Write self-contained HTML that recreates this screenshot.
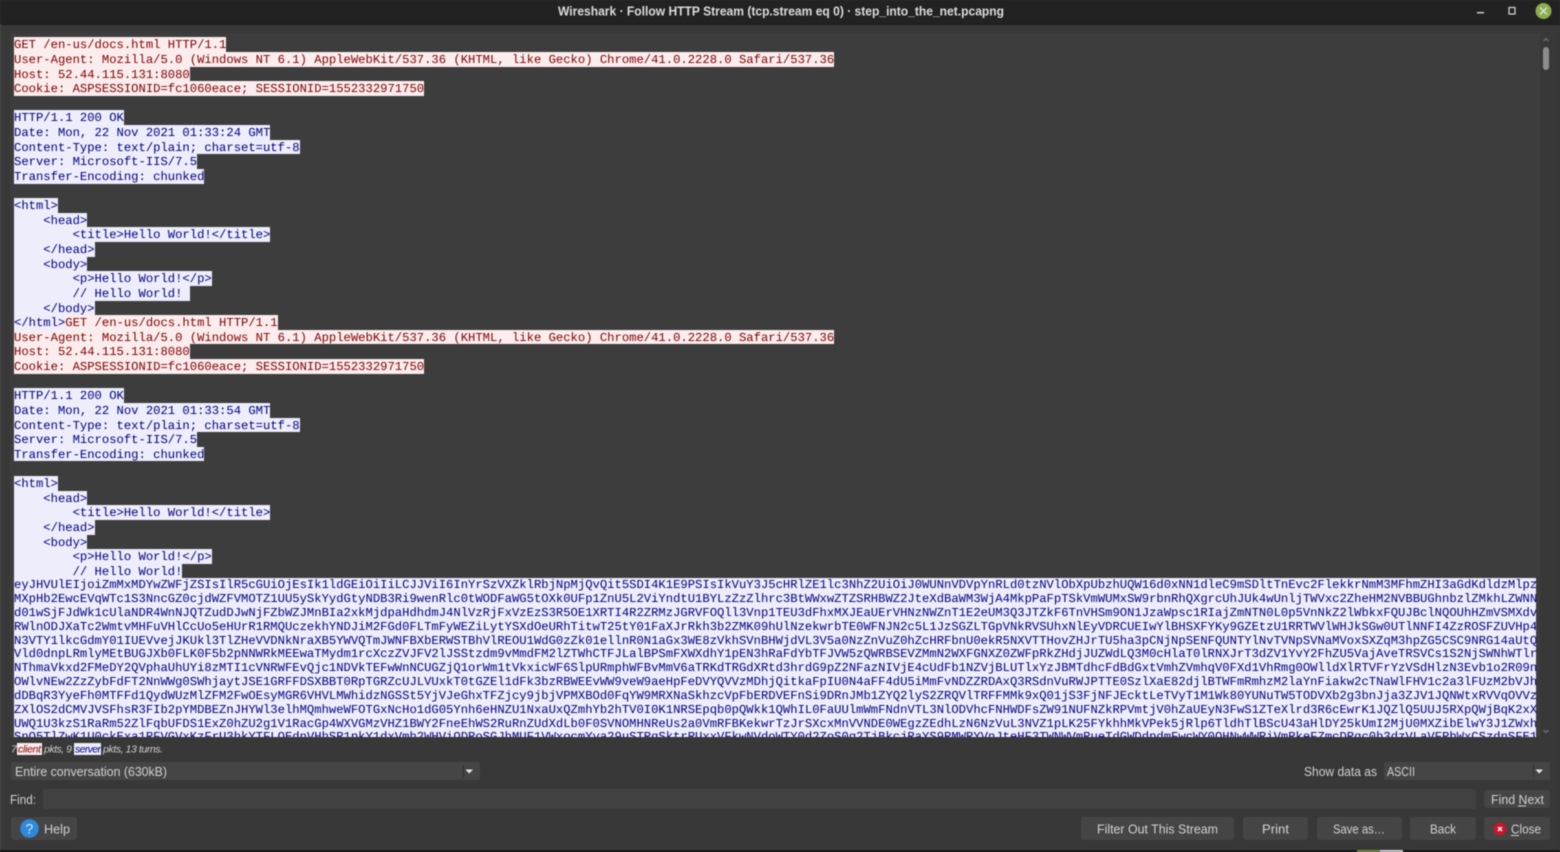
<!DOCTYPE html>
<html lang="en"><head><meta charset="utf-8"><title>Wireshark · Follow HTTP Stream</title>
<style>
html,body{margin:0;padding:0;width:1560px;height:852px;overflow:hidden;background:#383838}
#w{position:relative;width:1560px;height:852px;overflow:hidden;background:#383838;filter:blur(.42px)}
.a{position:absolute}
#tb{left:0;top:0;width:1560px;height:24px;background:#222}
#tb2{left:0;top:24px;width:1560px;height:1px;background:#1c1c1c}
#edge{left:0;top:24px;width:1px;height:826px;background:#4a4a4a}
#panel{left:10px;top:33px;width:1530px;height:704px;background:#3d3d3d}
#txt{left:14px;top:37.3px;width:1522px;height:699.7px;overflow:hidden;font:12.21px/16.6px "Liberation Mono",monospace;text-rendering:geometricPrecision}
#txt div{height:14.63px;white-space:pre}
#txt span{display:inline-block;height:14.63px;vertical-align:top}
.c{background:#fbeded;color:#7f0000}
.s{background:#ededfb;color:#00007f}
#txt div.b{background:#ededfb;color:#00007f;width:1522px;height:13.82px;line-height:15.4px}
.r{background:#454545;border-radius:2px}
.btn{background:#454545;border-radius:3px}
svg{position:absolute;left:0;top:0}
svg text{font-family:"Liberation Sans",sans-serif;font-size:13px;fill:#d2d2d2}
</style></head><body><div id="w">
<div id="tb" class="a"></div><div id="tb2" class="a"></div><div id="edge" class="a"></div>
<div id="panel" class="a"></div>
<div id="txt" class="a">
<div><span class="c">GET /en-us/docs.html HTTP/1.1</span></div>
<div><span class="c">User-Agent: Mozilla/5.0 (Windows NT 6.1) AppleWebKit/537.36 (KHTML, like Gecko) Chrome/41.0.2228.0 Safari/537.36</span></div>
<div><span class="c">Host: 52.44.115.131:8080</span></div>
<div><span class="c">Cookie: ASPSESSIONID=fc1060eace; SESSIONID=1552332971750</span></div>
<div></div>
<div><span class="s">HTTP/1.1 200 OK</span></div>
<div><span class="s">Date: Mon, 22 Nov 2021 01:33:24 GMT</span></div>
<div><span class="s">Content-Type: text/plain; charset=utf-8</span></div>
<div><span class="s">Server: Microsoft-IIS/7.5</span></div>
<div><span class="s">Transfer-Encoding: chunked</span></div>
<div></div>
<div><span class="s">&lt;html&gt;</span></div>
<div><span class="s">    &lt;head&gt;</span></div>
<div><span class="s">        &lt;title&gt;Hello World!&lt;/title&gt;</span></div>
<div><span class="s">    &lt;/head&gt;</span></div>
<div><span class="s">    &lt;body&gt;</span></div>
<div><span class="s">        &lt;p&gt;Hello World!&lt;/p&gt;</span></div>
<div><span class="s">        // Hello World! </span></div>
<div><span class="s">    &lt;/body&gt;</span></div>
<div><span class="s">&lt;/html&gt;</span><span class="c">GET /en-us/docs.html HTTP/1.1</span></div>
<div><span class="c">User-Agent: Mozilla/5.0 (Windows NT 6.1) AppleWebKit/537.36 (KHTML, like Gecko) Chrome/41.0.2228.0 Safari/537.36</span></div>
<div><span class="c">Host: 52.44.115.131:8080</span></div>
<div><span class="c">Cookie: ASPSESSIONID=fc1060eace; SESSIONID=1552332971750</span></div>
<div></div>
<div><span class="s">HTTP/1.1 200 OK</span></div>
<div><span class="s">Date: Mon, 22 Nov 2021 01:33:54 GMT</span></div>
<div><span class="s">Content-Type: text/plain; charset=utf-8</span></div>
<div><span class="s">Server: Microsoft-IIS/7.5</span></div>
<div><span class="s">Transfer-Encoding: chunked</span></div>
<div></div>
<div><span class="s">&lt;html&gt;</span></div>
<div><span class="s">    &lt;head&gt;</span></div>
<div><span class="s">        &lt;title&gt;Hello World!&lt;/title&gt;</span></div>
<div><span class="s">    &lt;/head&gt;</span></div>
<div><span class="s">    &lt;body&gt;</span></div>
<div><span class="s">        &lt;p&gt;Hello World!&lt;/p&gt;</span></div>
<div><span class="s">        // Hello World!</span></div>
<div class="b">eyJHVUlEIjoiZmMxMDYwZWFjZSIsIlR5cGUiOjEsIk1ldGEiOiIiLCJJViI6InYrSzVXZklRbjNpMjQvQit5SDI4K1E9PSIsIkVuY3J5cHRlZE1lc3NhZ2UiOiJ0WUNnVDVpYnRLd0tzNVlObXpUbzhUQW16d0xNN1dleC9mSDltTnEvc2FlekkrNmM3MFhmZHI3aGdKdldzMlpz</div>
<div class="b">MXpHb2EwcEVqWTc1S3NncGZ0cjdWZFVMOTZ1UU5ySkYydGtyNDB3Ri9wenRlc0tWODFaWG5tOXk0UFp1ZnU5L2ViYndtU1BYLzZzZlhrc3BtWWxwZTZSRHBWZ2JteXdBaWM3WjA4MkpPaFpTSkVmWUMxSW9rbnRhQXgrcUhJUk4wUnljTWVxc2ZheHM2NVBBUGhnbzlZMkhLZWNN</div>
<div class="b">d01wSjFJdWk1cUlaNDR4WnNJQTZudDJwNjFZbWZJMnBIa2xkMjdpaHdhdmJ4NlVzRjFxVzEzS3R5OE1XRTI4R2ZRMzJGRVFOQll3Vnp1TEU3dFhxMXJEaUErVHNzNWZnT1E2eUM3Q3JTZkF6TnVHSm9ON1JzaWpsc1RIajZmNTN0L0p5VnNkZ2lWbkxFQUJBclNQOUhHZmVSMXdv</div>
<div class="b">RWlnODJXaTc2WmtvMHFuVHlCcUo5eHUrR1RMQUczekhYNDJiM2FGd0FLTmFyWEZiLytYSXdOeURhTitwT25tY01FaXJrRkh3b2ZMK09hUlNzekwrbTE0WFNJN2c5L1JzSGZLTGpVNkRVSUhxNlEyVDRCUEIwYlBHSXFYKy9GZEtzU1RRTWVlWHJkSGw0UTlNNFI4ZzROSFZUVHp4</div>
<div class="b">N3VTY1lkcGdmY01IUEVvejJKUkl3TlZHeVVDNkNraXB5YWVQTmJWNFBXbERWSTBhVlREOU1WdG0zZk01ellnR0N1aGx3WE8zVkhSVnBHWjdVL3V5a0NzZnVuZ0hZcHRFbnU0ekR5NXVTTHovZHJrTU5ha3pCNjNpSENFQUNTYlNvTVNpSVNaMVoxSXZqM3hpZG5CSC9NRG14aUtQ</div>
<div class="b">Vld0dnpLRmlyMEtBUGJXb0FLK0F5b2pNNWRkMEEwaTMydm1rcXczZVJFV2lJSStzdm9vMmdFM2lZTWhCTFJLalBPSmFXWXdhY1pEN3hRaFdYbTFJVW5zQWRBSEVZMmN2WXFGNXZ0ZWFpRkZHdjJUZWdLQ3M0cHlaT0lRNXJrT3dZV1YvY2FhZU5VajAveTRSVCs1S2NjSWNhWTlr</div>
<div class="b">NThmaVkxd2FMeDY2QVphaUhUYi8zMTI1cVNRWFEvQjc1NDVkTEFwWnNCUGZjQ1orWm1tVkxicWF6SlpURmphWFBvMmV6aTRKdTRGdXRtd3hrdG9pZ2NFazNIVjE4cUdFb1NZVjBLUTlxYzJBMTdhcFdBdGxtVmhZVmhqV0FXd1VhRmg0OWlldXlRTVFrYzVSdHlzN3Evb1o2R09n</div>
<div class="b">OWlvNEw2ZzZybFdFT2NnWWg0SWhjaytJSE1GRFFDSXBBT0RpTGRZcUJLVUxkT0tGZEl1dFk3bzRBWEEvWW9veW9aeHpFeDVYQVVzMDhjQitkaFpIU0N4aFF4dU5iMmFvNDZZRDAxQ3RSdnVuRWJPTTE0SzlXaE82djlBTWFmRmhzM2laYnFiakw2cTNaWlFHV1c2a3lFUzM2bVJh</div>
<div class="b">dDBqR3YyeFh0MTFFd1QydWUzMlZFM2FwOEsyMGR6VHVLMWhidzNGSSt5YjVJeGhxTFZjcy9jbjVPMXBOd0FqYW9MRXNaSkhzcVpFbERDVEFnSi9DRnJMb1ZYQ2lyS2ZRQVlTRFFMMk9xQ01jS3FjNFJEcktLeTVyT1M1Wk80YUNuTW5TODVXb2g3bnJja3ZJV1JQNWtxRVVqOVVz</div>
<div class="b">ZXlOS2dCMVJVSFhsR3FIb2pYMDBEZnJHYWl3elhMQmhweWFOTGxNcHo1dG05Ynh6eHNZU1NxaUxQZmhYb2hTV0I0K1NRSEpqb0pQWkk1QWhIL0FaUUlmWmFNdnVTL3NlODVhcFNHWDFsZW91NUFNZkRPVmtjV0hZaUEyN3FwS1ZTeXlrd3R6cEwrK1JQZlQ5UUJ5RXpQWjBqK2xX</div>
<div class="b">UWQ1U3kzS1RaRm52ZlFqbUFDS1ExZ0hZU2g1V1RacGp4WXVGMzVHZ1BWY2FneEhWS2RuRnZUdXdLb0F0SVNOMHNReUs2a0VmRFBKekwrTzJrSXcxMnVVNDE0WEgzZEdhLzN6NzVuL3NVZ1pLK25FYkhhMkVPek5jRlp6TldhTlBScU43aHlDY25kUmI2MjU0MXZibElwY3J1ZWxh</div>
<div class="b">SnQ5TlZwK1U0ckExa1RFVGVxKzFrU3hkYTFLQEdnVHhSR1pkY1dxVmh2WHViODRoSGJhMUF1VWxocmYya29uSTRqSktrRUxxVFkwNVdoWTY0d2ZoS0g2TjBkcjRaYS9RMWRYVnJteHF3TWNWVmRueTdGWDdpdmFwcWY0OHNwWWRiVmRkeFZmcDRqc0h3dzVLaVFRbWxCSzdnSFE1Q</div>
</div>
<!-- chips -->
<div class="a" style="left:17px;top:743px;width:25px;height:12px;background:#fbeded"></div>
<div class="a" style="left:74px;top:743px;width:27px;height:12px;background:#ededfb"></div>
<!-- combos etc -->
<div class="a r" style="left:11px;top:762px;width:469px;height:18px"></div>
<div class="a r" style="left:1384px;top:762px;width:166px;height:18px"></div>
<div class="a r" style="left:43px;top:789px;width:1433px;height:20px;background:#414141"></div>
<div class="a btn" style="left:1484px;top:790px;width:66px;height:18px"></div>
<div class="a btn" style="left:11px;top:817px;width:66px;height:23px"></div>
<div class="a btn" style="left:1081px;top:817px;width:153px;height:23px"></div>
<div class="a btn" style="left:1243px;top:817px;width:65px;height:23px"></div>
<div class="a btn" style="left:1317px;top:817px;width:85px;height:23px"></div>
<div class="a btn" style="left:1410px;top:817px;width:66px;height:23px"></div>
<div class="a btn" style="left:1484px;top:817px;width:66px;height:23px"></div>
<div class="a" style="left:0;top:850px;width:1560px;height:2px;background:#161616"></div>
<div class="a" style="left:1357px;top:850px;width:23px;height:2px;background:#6f8a3a"></div>
<div class="a" style="left:1380px;top:850px;width:23px;height:2px;background:#cfcfcf"></div>
<svg width="1560" height="852" viewBox="0 0 1560 852">
<text x="558" y="15.5" textLength="446" lengthAdjust="spacingAndGlyphs" style="font-weight:bold;font-size:12.5px;fill:#dcdcdc">Wireshark · Follow HTTP Stream (tcp.stream eq 0) · step_into_the_net.pcapng</text>
<rect x="1477" y="12" width="7" height="1.4" fill="#d8d8d8"/>
<rect x="1509" y="7.5" width="6" height="6.5" fill="none" stroke="#d8d8d8" stroke-width="1.2"/>
<circle cx="1543.5" cy="11" r="8" fill="#8aae4e"/>
<path d="M1540 7.5L1547 14.5M1547 7.5L1540 14.5" stroke="#f0f0f0" stroke-width="1.2"/>
<path d="M1543.7 41L1546 38.5L1548.3 41" fill="none" stroke="#6a7078" stroke-width="1.4"/>
<rect x="1543" y="47" width="6" height="23" rx="3" fill="#8c8c8c"/>
<path d="M1543.7 730L1546 732.5L1548.3 730" fill="none" stroke="#6a7078" stroke-width="1.4"/>
<g style="font-style:italic">
<text x="11" y="752.5" style="font-size:10.5px;fill:#cfcfcf" textLength="6">7</text>
<text x="18" y="752.5" style="font-size:10.5px;fill:#7f0000" textLength="23">client</text>
<text x="44" y="752.5" style="font-size:10.5px;fill:#cfcfcf" textLength="28">pkts, 9</text>
<text x="75" y="752.5" style="font-size:10.5px;fill:#00007f" textLength="26">server</text>
<text x="103" y="752.5" style="font-size:10.5px;fill:#cfcfcf" textLength="60">pkts, 13 turns.</text>
</g>
<text x="15" y="776" textLength="152" lengthAdjust="spacingAndGlyphs">Entire conversation (630kB)</text>
<rect x="463" y="765" width="1" height="12" fill="#2c2c2c"/>
<path d="M465.5 769.5H473L469.2 773.5Z" fill="#e8e8e8"/>
<text x="1304" y="776" textLength="73" lengthAdjust="spacingAndGlyphs">Show data as</text>
<text x="1387" y="776" textLength="28" lengthAdjust="spacingAndGlyphs">ASCII</text>
<rect x="1533" y="765" width="1" height="12" fill="#2c2c2c"/>
<path d="M1535.5 769.5H1543L1539.2 773.5Z" fill="#e8e8e8"/>
<text x="10" y="804" textLength="26" lengthAdjust="spacingAndGlyphs">Find:</text>
<text x="1491" y="804" textLength="53" lengthAdjust="spacingAndGlyphs">Find Next</text>
<rect x="1518" y="805.5" width="8" height="1" fill="#d2d2d2"/>
<circle cx="29.5" cy="828.5" r="9.3" fill="#2f89dc"/>
<text x="25.5" y="833.5" style="font-size:14px;fill:#dbeafa">?</text>
<text x="44" y="833.5" textLength="26" lengthAdjust="spacingAndGlyphs">Help</text>
<text x="1097" y="833.5" textLength="121" lengthAdjust="spacingAndGlyphs">Filter Out This Stream</text>
<text x="1262" y="833.5" textLength="27" lengthAdjust="spacingAndGlyphs">Print</text>
<text x="1333" y="833.5" textLength="52" lengthAdjust="spacingAndGlyphs">Save as…</text>
<text x="1430" y="833.5" textLength="26" lengthAdjust="spacingAndGlyphs">Back</text>
<circle cx="1500" cy="829" r="6.5" fill="#c7162b"/>
<path d="M1498 827L1502 831M1502 827L1498 831" stroke="#fff" stroke-width="1.3"/>
<text x="1511" y="833.5" textLength="30" lengthAdjust="spacingAndGlyphs">Close</text>
<rect x="1511" y="835" width="8" height="1" fill="#d2d2d2"/>
</svg>
</div></body></html>
